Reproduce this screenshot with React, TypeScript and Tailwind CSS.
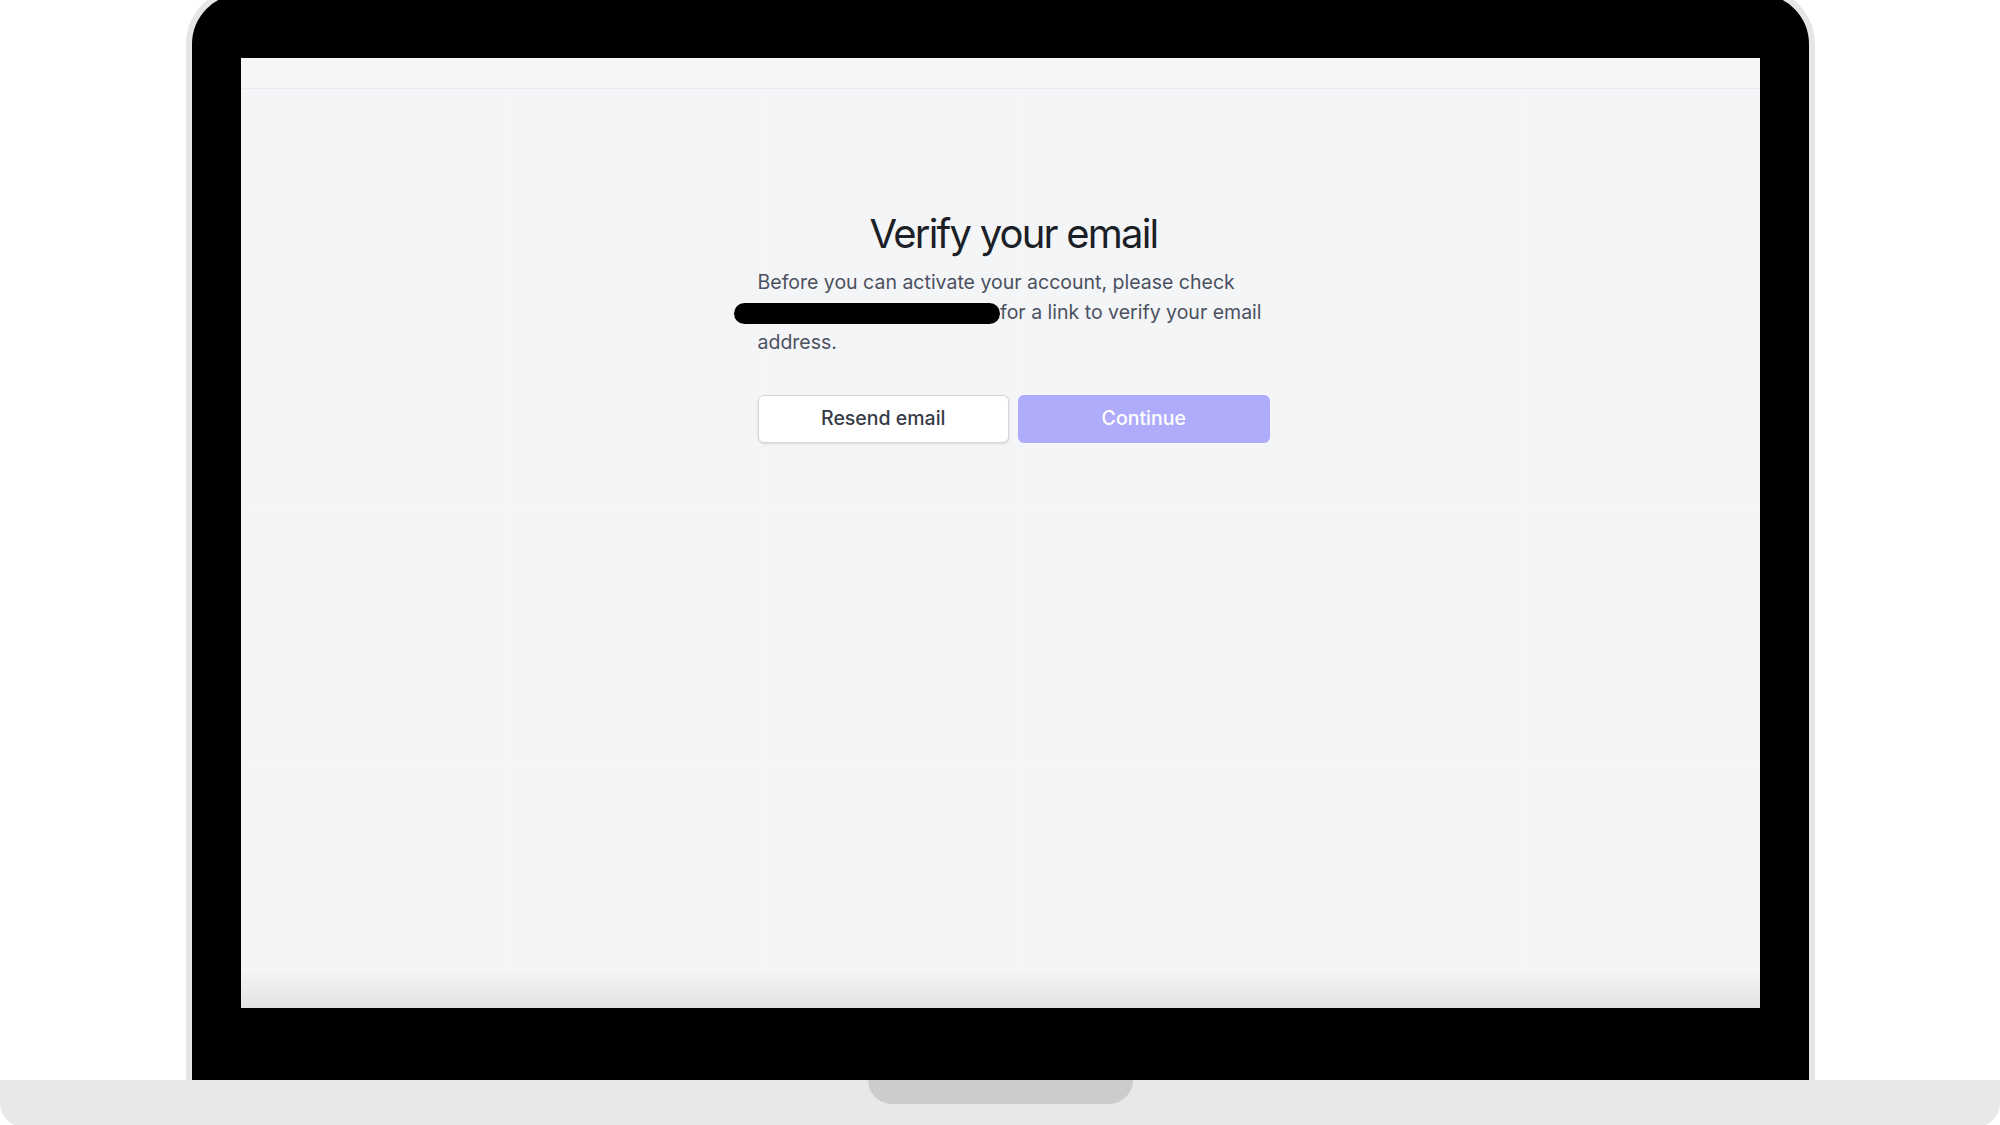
export default function App() {
  return (
    <div className="h-[1125px] w-[2000px] overflow-hidden bg-white font-['Inter',sans-serif]">
      {/* lid */}
      <div className="ml-[186px] mt-[-12px] flex h-[1092px] w-[1629px] flex-col rounded-t-[56px] border-[6px] border-b-0 border-[#e6e6e6] bg-black pl-[49px] pt-[64px]">
        <div className="flex h-[950px] w-[1519px] flex-col bg-linear-to-b from-[#f4f5f7] via-[#f4f5f7] via-[96%] to-[#e2e3e5]">
          <div className="h-[31px] border-b border-[#eaecef] bg-[#f5f6f8]" />
          <div className="flex justify-center pl-[26px] pt-[121px]">
            <div className="flex w-[512px] flex-col">
              <h1 className="text-center text-[40px] font-normal leading-[48px] tracking-[-0.045em] text-[#1c1f26]">
                Verify your email
              </h1>
              <p className="mt-[9px] text-[19.5px] leading-[30px] text-[#4b5160]">
                Before you can activate your account, please check{" "}
                <span className="relative inline-block h-[21px] w-[237px] align-middle">
                  <span className="absolute left-[-24px] top-[0px] h-[21px] w-[266px] rounded-full bg-black" />
                </span>{" "}
                for a link to verify your email address.
              </p>
              <div className="mt-[38px] grid grid-cols-2 gap-[9px]">
                <button className="h-[48px] rounded-[6px] border border-[#d4d6da] bg-white text-[19.5px] font-medium text-[#363b47] shadow-sm">
                  Resend email
                </button>
                <button className="h-[48px] rounded-[6px] bg-[#b0acfc] text-[19.5px] font-medium text-white">
                  Continue
                </button>
              </div>
            </div>
          </div>
        </div>
      </div>
      {/* base */}
      <div className="flex h-[47px] w-[2000px] justify-center rounded-b-[24px] bg-[#e8e8e8]">
        <div className="h-[24px] w-[265px] rounded-b-[24px] bg-[#cccccc]" />
      </div>
    </div>
  );
}
